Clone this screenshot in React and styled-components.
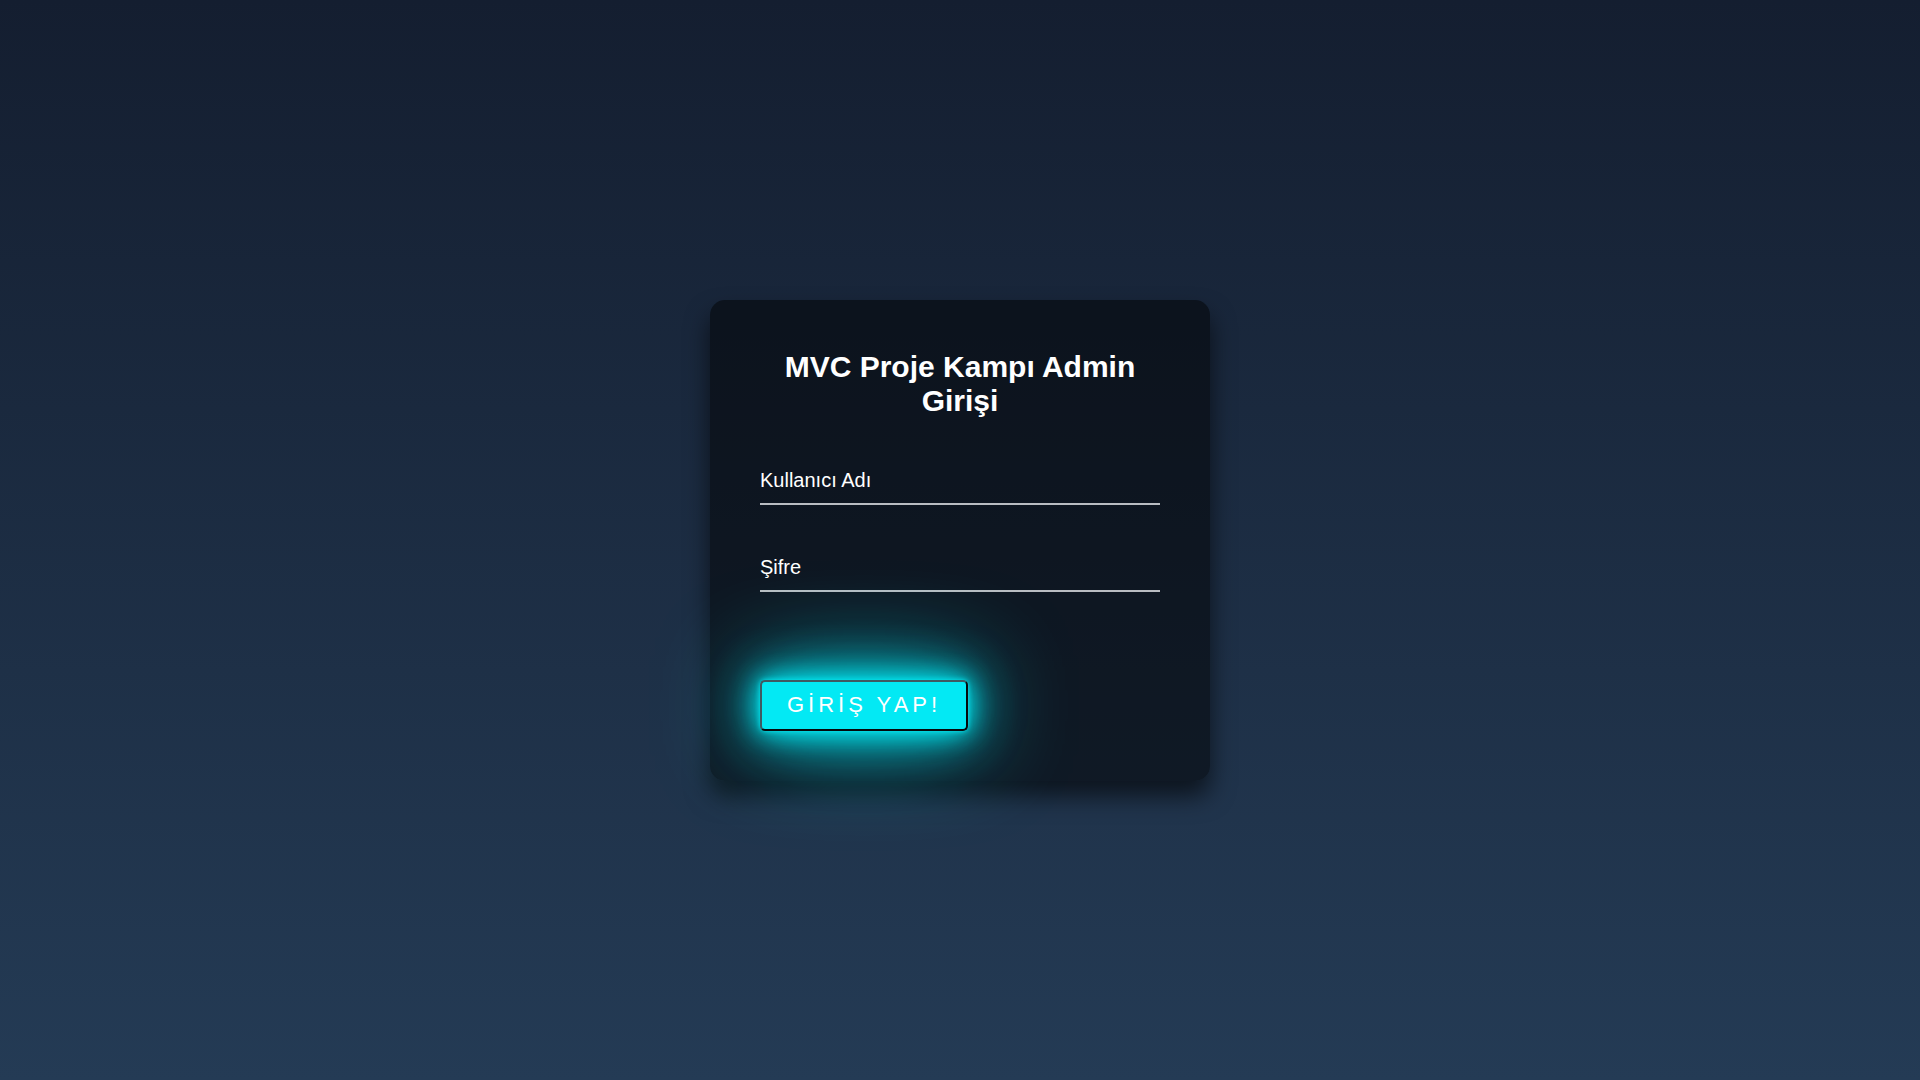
import React from "react";
import styled, { createGlobalStyle } from "styled-components";

const GlobalStyle = createGlobalStyle`
  * { box-sizing: border-box; }
  html, body { margin: 0; padding: 0; height: 100%; }
  body {
    font-family: "Liberation Sans", Arial, sans-serif;
    background: linear-gradient(#141e30, #243b55);
    min-height: 100vh;
  }
  #root { min-height: 100vh; }
`;

const Page = styled.main`
  min-height: 100vh;
  display: flex;
  align-items: center;
  justify-content: center;
`;

const Card = styled.form`
  width: 500px;
  padding: 50px;
  background: rgba(0, 0, 0, 0.5);
  border-radius: 15px;
  box-shadow: 0 15px 25px rgba(0, 0, 0, 0.6);
  display: flex;
  flex-direction: column;
  align-items: stretch;
`;

const Title = styled.h2`
  margin: 0 0 39px;
  padding: 0;
  color: #fff;
  font-size: 30px;
  font-weight: 700;
  line-height: 34.5px;
  text-align: center;
`;

const Field = styled.input`
  display: block;
  width: 100%;
  margin: 0 0 ${(p) => (p.$last ? "88px" : "40px")};
  padding: 10px 0 11px;
  font-family: "Liberation Sans", Arial, sans-serif;
  font-size: 20px;
  line-height: 24px;
  color: #fff;
  background: transparent;
  border: none;
  border-bottom: 2px solid #b9bdc2;
  outline: none;
  &::placeholder {
    color: #fff;
    opacity: 1;
  }
`;

const Row = styled.div`
  display: flex;
  justify-content: flex-start;
`;

const Button = styled.button`
  padding: 10px 25px 12px 25px;
  font-family: "Liberation Sans", Arial, sans-serif;
  font-size: 22px;
  line-height: 25px;
  letter-spacing: 4px;
  color: #fff;
  background: #03e9f4;
  border: 2px solid;
  border-color: #3f5a62 #050a0c #050a0c #3f5a62;
  border-radius: 5px;
  cursor: pointer;
  box-shadow: 0 0 5px #03e9f4, 0 0 25px #03e9f4, 0 0 50px #03e9f4,
    0 0 100px #03e9f4;
`;

export default function App() {
  return (
    <>
      <GlobalStyle />
      <Page>
        <Card onSubmit={(e) => e.preventDefault()}>
          <Title>MVC Proje Kampı Admin Girişi</Title>
          <Field type="text" placeholder="Kullanıcı Adı" />
          <Field type="password" placeholder="Şifre" $last />
          <Row>
            <Button type="submit">GİRİŞ YAP!</Button>
          </Row>
        </Card>
      </Page>
    </>
  );
}
